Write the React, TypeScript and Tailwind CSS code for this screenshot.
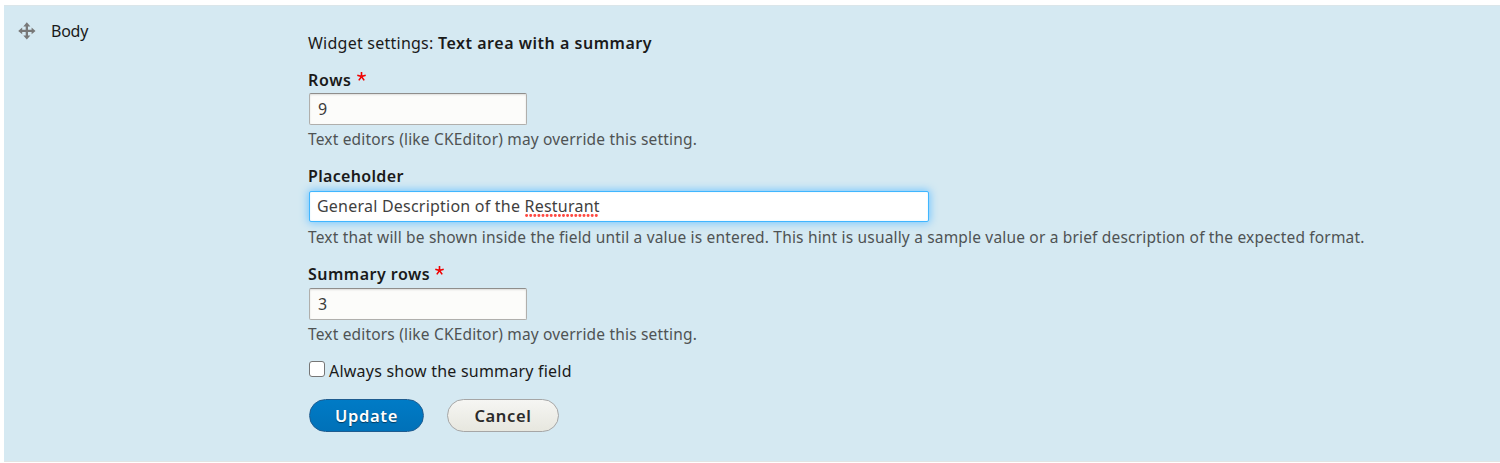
import type { ReactNode } from "react";

function Label({ children, required, className }: { children: ReactNode; required?: boolean; className: string }) {
  return (
    <div className="flex h-5 text-base leading-5 font-semibold">
      <span className={className}>{children}</span>
      {required && (
        <svg className="mt-[2px] ml-[5px]" width="9" height="9" viewBox="0 0 9 9" fill="none" stroke="#f00000" strokeWidth="1.6">
          <path d="M4.5 0V4.6M0.3 3.2L4.5 4.6M8.7 3.2L4.5 4.6M1.8 8.4L4.5 4.6M7.2 8.4L4.5 4.6" />
        </svg>
      )}
    </div>
  );
}

function Help({ children }: { children: ReactNode }) {
  return (
    <div className="h-5 pt-px text-[15.5px] leading-5 text-[#4f5354]">
      <span className="tracking-[0.175px]">{children}</span>
    </div>
  );
}

function NumberBox({ value }: { value: string }) {
  return (
    <div className="ml-px flex h-8 w-[218px] items-center rounded-[2px] border border-[#b0afac] border-t-[#8f8e8c] bg-[#fcfcfa] pl-2 text-base text-[#3b3b3b] shadow-[inset_0_1px_2px_rgba(0,0,0,0.125)]">
      {value}
    </div>
  );
}

export default function App() {
  return (
    <div className="h-[463px] w-[1500px] bg-white pt-[5px] pl-1 font-['Noto_Sans','Open_Sans',sans-serif] whitespace-nowrap text-[#1a1a1a]">
      <div className="flex h-[457px] border-t border-b border-t-[#dbe6ea] border-b-[#e2e4e3] bg-[#d5e9f2]">
        <div className="flex w-[304px] pt-[15px] pl-[14px]">
          <svg className="mt-px" width="18" height="18" viewBox="0 0 18 18" fill="#787878">
            <path d="M8.8 0.3L12.4 4.4H10V7.8H13.6V5.5L17.5 8.9L13.6 12.3V10H10V13.6H12.4L8.8 17.5L5.3 13.6H7.7V10H4.2V12.3L0.2 8.9L4.2 5.5V7.8H7.7V4.4H5.3Z" />
          </svg>
          <span className="ml-[15px] h-5 text-base leading-5 tracking-[-0.25px]">Body</span>
        </div>

        <div className="flex flex-col items-start pt-[27px]">
          <div className="flex h-5 text-base leading-5">
            <span className="w-[130px] tracking-[0.24px]">Widget settings:</span>
            <span className="font-semibold tracking-[0.52px]">Text area with a summary</span>
          </div>

          <div className="mt-[17px]"><Label required className="tracking-[0.65px]">Rows</Label></div>
          <div className="mt-[3px]"><NumberBox value="9" /></div>
          <div className="mt-[3px]"><Help>Text editors (like CKEditor) may override this setting.</Help></div>

          <div className="mt-[18px]"><Label className="tracking-[0.33px]">Placeholder</Label></div>
          <div className="mt-[5px] ml-px flex h-[31px] w-[620px] items-center rounded-[2px] border border-[#40b6ff] bg-white pb-px pl-[7px] text-base text-[#3f3f3f] shadow-[0_0_8px_1px_#73c5ff,inset_0_0_2px_#d8eefb]">
            <span className="tracking-[0.22px]">
              General Description of the{" "}
              <span className="relative">
                Resturant
                <svg className="absolute bottom-0 left-0 h-[3px] w-full" fill="none">
                  <line x1="1.5" y1="1.5" x2="100%" y2="1.5" stroke="#ff4a42" strokeWidth="2.8" strokeLinecap="round" strokeDasharray="0.2 3.9" />
                </svg>
              </span>
            </span>
          </div>
          <div className="mt-1">
            <Help>
              Text that will be shown inside the field until a value is entered. This hint is usually a sample value or a brief description of the expected format.
            </Help>
          </div>

          <div className="mt-[18px]"><Label required className="tracking-[0.48px]">Summary rows</Label></div>
          <div className="mt-1"><NumberBox value="3" /></div>
          <div className="mt-[3px]"><Help>Text editors (like CKEditor) may override this setting.</Help></div>

          <div className="mt-[18px] ml-px flex h-5">
            <span className="h-4 w-4 rounded-[3px] border border-[#767676] bg-white" />
            <span className="ml-1 text-base leading-5 tracking-[0.22px]">Always show the summary field</span>
          </div>

          <div className="mt-[18px] ml-px flex gap-[23px] text-[16.5px] font-semibold tracking-[0.65px]">
            <button className="h-[33px] w-[115px] rounded-full border border-[#1e5c90] bg-linear-to-b from-[#007bc6] to-[#0071b8] pt-0.5 text-white [text-shadow:0_1px_1px_rgba(0,0,0,0.5)]">Update</button>
            <button className="h-[33px] w-[112px] rounded-full border border-[#a6a6a6] bg-linear-to-b from-[#f6f6f3] to-[#e7e7df] pt-0.5 text-[#2b2b2b]">Cancel</button>
          </div>
        </div>
      </div>
    </div>
  );
}
